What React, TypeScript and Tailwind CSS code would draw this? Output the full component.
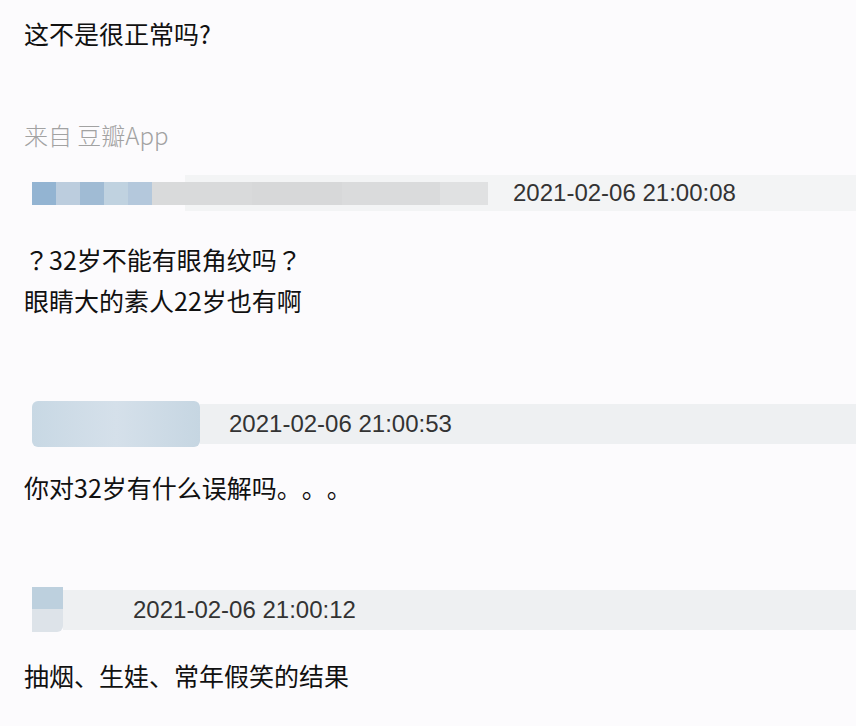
const cjk = "font-['Noto_Sans_CJK_SC','Noto_Sans',sans-serif] [text-spacing-trim:space-all]";
const dateFont = "font-['Liberation_Sans',Arial,sans-serif] text-[24px] tracking-[0px] text-[#333]";
const centeredMark = "font-['Noto_Sans_CJK_TC',sans-serif]";

type Block = { w: number; color: string };

const row1Blocks: Block[] = [
  { w: 24, color: "bg-[#93b4d2]" },
  { w: 24, color: "bg-[#bccdde]" },
  { w: 24, color: "bg-[#a0bbd4]" },
  { w: 24, color: "bg-[#c0d2e0]" },
  { w: 24, color: "bg-[#b4c8dc]" },
  { w: 100, color: "bg-[#d9dadb]" },
  { w: 90, color: "bg-[#d7d8d9]" },
  { w: 98, color: "bg-[#dadbdc]" },
  { w: 48, color: "bg-[#e0e1e2]" },
];

const App: React.FC = () => {
  return (
    <div className={`min-h-[726px] w-[856px] bg-[#fcfbfd] ${cjk} text-[#111] overflow-hidden`}>
      <div className="pt-[15px] pl-[24px] h-[36px] box-content text-[25px] leading-[36px]">
        这不是很正常吗?
      </div>

      <div className="mt-[66px] pl-[24px] h-[36px] text-[24px] leading-[36px] text-[#a2a2a2] font-light">
        来自 豆瓣App
      </div>

      {/* comment 1 */}
      <div className="mt-[22px] h-[36px] flex items-center bg-[linear-gradient(to_right,transparent_185px,#f3f4f5_185px)]">
        <div className="ml-[32px] flex h-[23px]">
          {row1Blocks.map((b, i) => (
            <div key={i} className={`h-full ${b.color}`} style={{ width: b.w }} />
          ))}
        </div>
        <div className={`flex-1 h-full flex items-center pl-[25px] ${dateFont}`}>
          2021-02-06 21:00:08
        </div>
      </div>

      <div className="mt-[28px] pl-[24px] text-[25px] leading-[41px]">
        <p>
          <span className={centeredMark}>？</span>32岁不能有眼角纹吗<span className={centeredMark}>？</span>
        </p>
        <p>眼睛大的素人22岁也有啊</p>
      </div>

      {/* comment 2 */}
      <div className="mt-[79px] h-[47px] flex items-center">
        <div className="ml-[32px] h-[46px] w-[168px] rounded-[6px] bg-[linear-gradient(to_right,#c8d8e4,#d5e0ea_50%,#c6d6e2)]" />
        <div className={`flex-1 h-[40px] bg-[#eef0f2] flex items-center pl-[29px] ${dateFont}`}>
          2021-02-06 21:00:53
        </div>
      </div>

      <div className="mt-[22px] pl-[24px] h-[36px] text-[25px] leading-[36px]">
        你对32岁有什么误解吗。。。
      </div>

      {/* comment 3 */}
      <div className="mt-[82px] h-[45px] flex items-center">
        <div className="ml-[32px] h-[45px] w-[31px] flex flex-col">
          <div className="h-[22px] bg-[#bdd0de]" />
          <div className="flex-1 bg-[#dde3e9] rounded-br-[6px]" />
        </div>
        <div className={`flex-1 h-[40px] bg-[#eef0f2] flex items-center pl-[70px] ${dateFont}`}>
          2021-02-06 21:00:12
        </div>
      </div>

      <div className="mt-[25px] pl-[24px] h-[36px] text-[25px] leading-[36px]">
        抽烟、生娃、常年假笑的结果
      </div>
    </div>
  );
};

export default App;
